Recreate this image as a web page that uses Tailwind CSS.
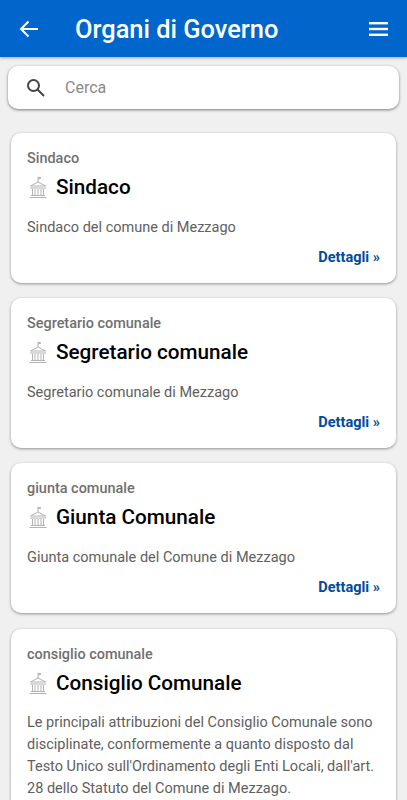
<!DOCTYPE html>
<html lang="it">
<head>
<meta charset="utf-8">
<script src="https://cdn.jsdelivr.net/npm/@tailwindcss/browser@4"></script>
</head>
<body class="m-0 overflow-hidden">
<div class="w-[407px] h-[800px] overflow-hidden bg-[#f0f0f0] font-['Roboto',sans-serif] relative">
  <header class="h-[57px] bg-[#0066cc] flex items-center pl-[19px] pr-[19px] shadow-[0_1px_3px_rgba(0,0,0,0.3)] relative">
    <svg class="w-5 h-5 shrink-0" viewBox="0 0 20 20" fill="none" stroke="#fff" stroke-width="2"><path d="M19 10H2M9.500 2.500L2 10l7.500 7.500"/></svg>
    <h1 class="ml-[36px] text-[25.400px] leading-[28px] font-medium text-white flex-1">Organi di Governo</h1>
    <svg class="w-[19px] h-[14px] shrink-0" viewBox="0 0 19 14" fill="#fff"><rect y="0" width="19" height="2.400"/><rect y="5.800" width="19" height="2.400"/><rect y="11.600" width="19" height="2.400"/></svg>
  </header>
  <div class="mx-2 mt-[9px] h-[43px] bg-white rounded-[10px] shadow-[0_1px_3px_rgba(0,0,0,0.5)] flex items-center pl-[18px]">
    <svg class="w-[19px] h-[19px] shrink-0" viewBox="0 0 19 19" fill="none" stroke="#444" stroke-width="2"><circle cx="7.500" cy="7.500" r="5.500"/><path d="M11.500 11.500L18 18"/></svg>
    <span class="ml-[20px] text-[16px] text-[#8a8a8a]">Cerca</span>
  </div>
  <main class="mt-[24px] mx-[11px] flex flex-col gap-[15.200px]">
    <article class="h-[150px] bg-white rounded-[10px] shadow-[0_1px_3px_rgba(0,0,0,0.4)] pl-4 pr-[16px] pt-[17px]">
      <p class="text-[14.450px] leading-[18px] font-medium text-[#707070]">Sindaco</p>
      <div class="flex items-center mt-[5px] h-[28px]">
        <svg class="w-[18px] h-[22px] ml-[2px] shrink-0" viewBox="0 0 18 22" fill="none" stroke="#aaa" stroke-width="0.900"><path d="M9 6V1l3 1-3 1M1.500 10L9 6l7.500 4zM1 12h16M3.500 13v6M6 13v6M9 13v6M12 13v6M14.500 13v6M2 19.500h14M0.500 21.500h17"/></svg>
        <h2 class="ml-[9px] text-[20.700px] leading-[28px] font-[480] text-black">Sindaco</h2>
      </div>
      <p class="mt-[17px] text-[14.500px] leading-[20px] text-[#606060]">Sindaco del comune di Mezzago</p>
      <p class="mt-[10px] text-right text-[14.500px] leading-[20px] font-bold text-[#004c99]">Dettagli »</p>
    </article>
    <article class="h-[150px] bg-white rounded-[10px] shadow-[0_1px_3px_rgba(0,0,0,0.4)] pl-4 pr-[16px] pt-[17px]">
      <p class="text-[14.450px] leading-[18px] font-medium text-[#707070]">Segretario comunale</p>
      <div class="flex items-center mt-[5px] h-[28px]">
        <svg class="w-[18px] h-[22px] ml-[2px] shrink-0" viewBox="0 0 18 22" fill="none" stroke="#aaa" stroke-width="0.900"><path d="M9 6V1l3 1-3 1M1.500 10L9 6l7.500 4zM1 12h16M3.500 13v6M6 13v6M9 13v6M12 13v6M14.500 13v6M2 19.500h14M0.500 21.500h17"/></svg>
        <h2 class="ml-[9px] text-[20.700px] leading-[28px] font-[480] text-black">Segretario comunale</h2>
      </div>
      <p class="mt-[17px] text-[14.500px] leading-[20px] text-[#606060]">Segretario comunale di Mezzago</p>
      <p class="mt-[10px] text-right text-[14.500px] leading-[20px] font-bold text-[#004c99]">Dettagli »</p>
    </article>
    <article class="h-[150px] bg-white rounded-[10px] shadow-[0_1px_3px_rgba(0,0,0,0.4)] pl-4 pr-[16px] pt-[17px]">
      <p class="text-[14.450px] leading-[18px] font-medium text-[#707070]">giunta comunale</p>
      <div class="flex items-center mt-[5px] h-[28px]">
        <svg class="w-[18px] h-[22px] ml-[2px] shrink-0" viewBox="0 0 18 22" fill="none" stroke="#aaa" stroke-width="0.900"><path d="M9 6V1l3 1-3 1M1.500 10L9 6l7.500 4zM1 12h16M3.500 13v6M6 13v6M9 13v6M12 13v6M14.500 13v6M2 19.500h14M0.500 21.500h17"/></svg>
        <h2 class="ml-[9px] text-[20.700px] leading-[28px] font-[480] text-black">Giunta Comunale</h2>
      </div>
      <p class="mt-[17px] text-[14.500px] leading-[20px] text-[#606060]">Giunta comunale del Comune di Mezzago</p>
      <p class="mt-[10px] text-right text-[14.500px] leading-[20px] font-bold text-[#004c99]">Dettagli »</p>
    </article>
    <article class="bg-white rounded-[10px] shadow-[0_1px_3px_rgba(0,0,0,0.4)] pl-4 pr-[16px] pt-[17px] pb-4">
      <p class="text-[14.450px] leading-[18px] font-medium text-[#707070]">consiglio comunale</p>
      <div class="flex items-center mt-[5px] h-[28px]">
        <svg class="w-[18px] h-[22px] ml-[2px] shrink-0" viewBox="0 0 18 22" fill="none" stroke="#aaa" stroke-width="0.900"><path d="M9 6V1l3 1-3 1M1.500 10L9 6l7.500 4zM1 12h16M3.500 13v6M6 13v6M9 13v6M12 13v6M14.500 13v6M2 19.500h14M0.500 21.500h17"/></svg>
        <h2 class="ml-[9px] text-[20.700px] leading-[28px] font-[480] text-black">Consiglio Comunale</h2>
      </div>
      <p class="mt-[15px] text-[14.500px] leading-[22px] text-[#606060]">Le principali attribuzioni del Consiglio Comunale sono disciplinate, conformemente a quanto disposto dal Testo Unico sull'Ordinamento degli Enti Locali, dall'art. 28 dello Statuto del Comune di Mezzago.</p>
    </article>
  </main>
</div>
</body>
</html>
